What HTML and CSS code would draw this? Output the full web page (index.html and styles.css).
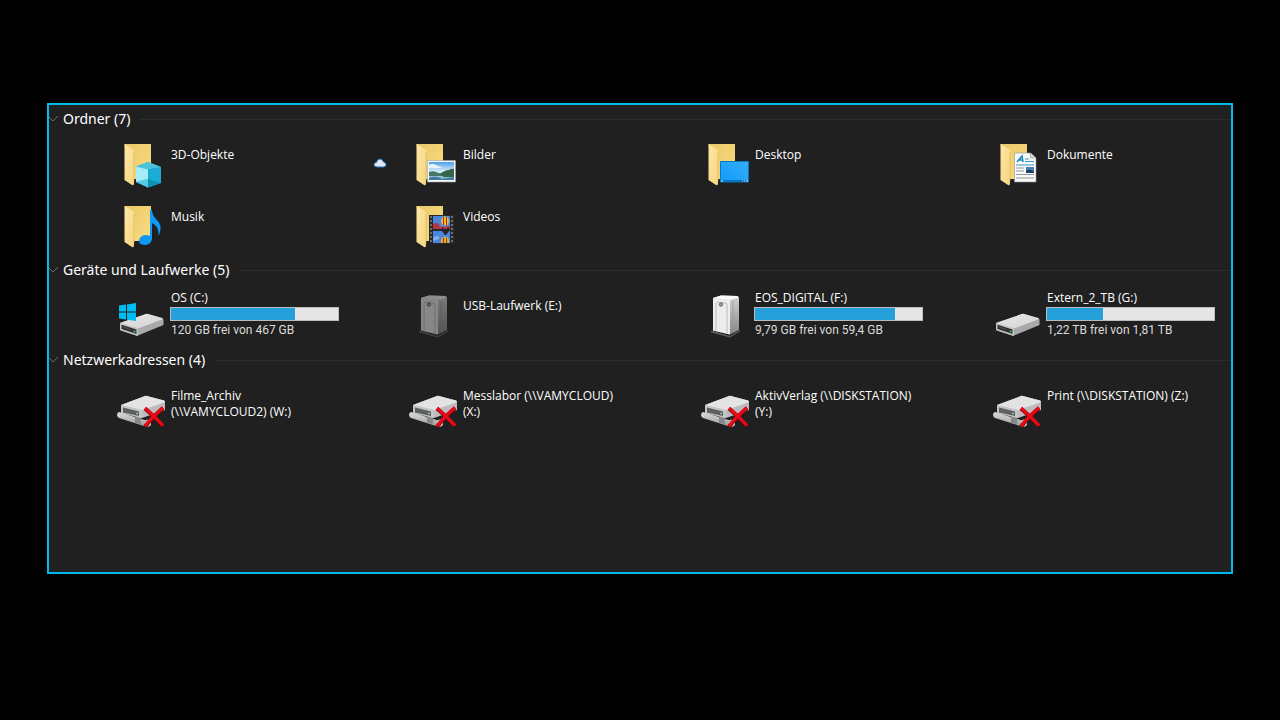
FILE: index.html
```html
<!DOCTYPE html>
<html lang="de">
<head>
    <meta charset="UTF-8">
    <meta name="viewport" content="width=device-width, initial-scale=1.0">
    <title>Dieser PC</title>
    <link rel="stylesheet" href="styles.css">
</head>
<body>
    <!-- Gemeinsame Symbole -->
    <svg class="defs" width="0" height="0" aria-hidden="true">
        <defs>
            <linearGradient id="folderBack" x1="0" y1="0" x2="1" y2="1">
                <stop offset="0" stop-color="#e9c866"/>
                <stop offset="1" stop-color="#fbdc83"/>
            </linearGradient>
            <linearGradient id="folderFlap" x1="0" y1="0" x2="1" y2="1">
                <stop offset="0" stop-color="#ffe7a4"/>
                <stop offset="1" stop-color="#f6d581"/>
            </linearGradient>
            <linearGradient id="sky" x1="0" y1="0" x2="0" y2="1">
                <stop offset="0" stop-color="#4b9fea"/>
                <stop offset="0.5" stop-color="#d3ebf5"/>
                <stop offset="1" stop-color="#6fa9c4"/>
            </linearGradient>
            <linearGradient id="screen" x1="0" y1="1" x2="1" y2="0">
                <stop offset="0" stop-color="#109bf8"/>
                <stop offset="1" stop-color="#35adfb"/>
            </linearGradient>
            <linearGradient id="driveTop" x1="0" y1="0" x2="1" y2="1">
                <stop offset="0" stop-color="#e9e9e9"/>
                <stop offset="1" stop-color="#d2d2d4"/>
            </linearGradient>
            <linearGradient id="tube" x1="0" y1="0" x2="0" y2="1">
                <stop offset="0" stop-color="#dcdcdc"/>
                <stop offset="1" stop-color="#9a9a9a"/>
            </linearGradient>
            <linearGradient id="towerSide" x1="0" y1="0" x2="0" y2="1">
                <stop offset="0" stop-color="#d5d5d5"/>
                <stop offset="1" stop-color="#858585"/>
            </linearGradient>
        </defs>
        <symbol id="folder" viewBox="0 0 52 48">
            <path d="M9.500 3H36V38H17Z" fill="url(#folderBack)"/>
            <path d="M9.500 3L18 8Q19 9 19 11V42Q19 45 17 44L9.500 39Z" fill="url(#folderFlap)"/>
            <path d="M19 11V40" stroke="#d9b65c" stroke-width="0.6"/>
        </symbol>
        <symbol id="drive" viewBox="0 0 52 48">
            <path d="M5 32L31 23Q32 22.600 33 23L47 27Q48.500 27.500 48.500 29V34L23 44.500Q22 45 21 44.500L6 39.500Q5 39 5 38Z" fill="#a9a9ab"/>
            <path d="M5 32L31 23Q32 22.600 33 23L47 27Q48.500 27.700 47 28.500L23 37.500Z" fill="url(#driveTop)"/>
            <path d="M5 32L23 37.500V45L6 39.500Q5 39 5 38Z" fill="#c6c6c6"/>
            <path d="M6.500 33.700L21.500 38.500V43L6.500 38Z" fill="#303234"/>
            <path d="M8 36L15 38.500" stroke="#555" stroke-width="1"/>
            <circle cx="19.500" cy="40.500" r="1" fill="#35d04a"/>
        </symbol>
        <symbol id="tower" viewBox="0 -1 52 48">
            <path d="M12 38.500L31 44L41 38V39.500L31 45.500L12 40.500Z" fill="#5b5b5b"/>
            <path d="M14 6L22 3.500L38 4Q40 4.500 40 6V38L31 42.500L14 38.500Z" fill="url(#towerSide)"/>
            <path d="M14 6L22 3.500L38 4L40 5.500L31 8Z" fill="#fafafa"/>
            <path d="M14 6L31 8V42.500L14 38.500Z" fill="#ededed"/>
            <path d="M17 39V12Q17 10 19 10L26 11Q28 11 28 13V41" fill="none" stroke="#bcbcbc" stroke-width="1"/>
            <circle cx="22" cy="12.500" r="1.700" fill="#a3a19a" stroke="#66645b" stroke-width="1"/>
            <path d="M34 9V39" stroke="#999" stroke-width="0.700"/>
        </symbol>
        <symbol id="netdrive" viewBox="0 0 52 48">
            <path d="M4 30L36 40V43Q33 46 29 44L4 36Q2 35 2 33Q2 30.500 4 30Z" fill="url(#tube)"/>
            <path d="M20 35L26 33V42L20 41Z" fill="#85878a"/>
            <path d="M6 23L30 14Q31 13.600 32 14L49 18.500Q50 19 50 21V28L27 36L6 31Z" fill="#bcbcbe"/>
            <path d="M6 23L30 14Q31 13.600 32 14L49 18.500Q51 19.500 49 20.500L27 28Z" fill="#e3e3e4"/>
            <path d="M6 23L27 28V36L6 31Z" fill="#c5c5c6"/>
            <path d="M8 25.500L24 29.500V34L8 30.500Z" fill="#5d6062"/>
            <circle cx="22" cy="31.500" r="0.800" fill="#c5f5c8"/>
            <ellipse cx="33" cy="41" rx="3" ry="3.500" fill="#c9c9c9"/>
            <path d="M30 26.500Q39 34 48 44M48 26Q38 34 30 44.500" fill="none" stroke="#8f0007" stroke-width="4"/>
            <path d="M30 26Q39 33.500 48 43.500M48 25.500Q38 33.500 30 44" fill="none" stroke="#ea0a17" stroke-width="3"/>
        </symbol>
    </svg>

    <main class="explorer">
        <section class="group">
            <h2 class="group-title">
                <button type="button" aria-expanded="true">
                    <svg class="chevron" viewBox="0 0 10 8" aria-hidden="true"><path d="M0 2L4 6L9 1"/></svg>
                    Ordner (7)
                </button>
            </h2>
            <ul class="tiles">
                <li>
                    <a class="tile" href="#3d-objekte">
                        <span class="status"></span>
                        <svg class="icon" viewBox="0 0 52 48" aria-hidden="true">
                            <use href="#folder"/>
                            <path d="M33 21L46 26V42L33 46.500L21 41V25.500Z" fill="#23b5d8"/>
                            <path d="M33 21L46 26L33 28.500L21 25.500Z" fill="#4cc3dd"/>
                            <path d="M21 25.500L33 28.500V38L21 41Z" fill="#a5ecf7"/>
                            <path d="M33 28.500L46 26V42L33 38Z" fill="#1cabd2"/>
                            <path d="M21 41L33 38V46.500Z" fill="#55cde3"/>
                            <path d="M33 38L46 42L33 46.500Z" fill="#0f91b7"/>
                        </svg>
                        <span class="info">3D-Objekte</span>
                    </a>
                </li>
                <li>
                    <a class="tile" href="#bilder">
                        <span class="status">
                            <svg class="cloud" viewBox="0 0 14 10" aria-hidden="true">
                                <path d="M4 9Q1 9 1 6.500Q1 4.500 3.500 4.500Q4 1 7 1Q9.500 1 10.500 4Q13 4.500 13 6.500Q13 9 10.500 9Z"/>
                            </svg>
                        </span>
                        <svg class="icon" viewBox="0 0 52 48" aria-hidden="true">
                            <use href="#folder"/>
                            <path d="M20.500 19.500H48.500V41H20.500Z" fill="#f6f7f8" stroke="#9ba4ab" stroke-width="0.600"/>
                            <path d="M22 21H47V39H22Z" fill="url(#sky)"/>
                            <path d="M22 24Q25 22 29 24T36 26Q32 28 22 27Z" fill="#e9f5fb"/>
                            <path d="M22 31Q27 29 31 32Q39 33 47 33V35H22Z" fill="#477767"/>
                            <path d="M33 33Q38 29 42 29Q44 27 47 28V36H37Z" fill="#35634a"/>
                            <path d="M22 37Q29 34 35 38L47 36V39H22Z" fill="#40799a"/>
                        </svg>
                        <span class="info">Bilder</span>
                    </a>
                </li>
                <li>
                    <a class="tile" href="#desktop">
                        <span class="status"></span>
                        <svg class="icon" viewBox="0 0 52 48" aria-hidden="true">
                            <use href="#folder"/>
                            <path d="M21.500 20.500H49.500V41H21.500Z" fill="url(#screen)" stroke="#0878c2" stroke-width="1"/>
                            <path d="M22 39H49V41H22Z" fill="#0876be"/>
                            <path d="M22 40H24M43 40H44M45 40H46M47 40H49" stroke="#d5effd" stroke-width="1"/>
                        </svg>
                        <span class="info">Desktop</span>
                    </a>
                </li>
                <li>
                    <a class="tile" href="#dokumente">
                        <span class="status"></span>
                        <svg class="icon" viewBox="0 0 52 48" aria-hidden="true">
                            <use href="#folder"/>
                            <path d="M23.500 12H39.500L45 17V41H23.500Z" fill="#f9f9f9" stroke="#8c9298" stroke-width="0.600"/>
                            <path d="M39.500 12V17H45" fill="#d8dde1" stroke="#8c9298" stroke-width="0.600"/>
                            <path d="M26 21L31 15L32 21M28 19H32" fill="none" stroke="#1687ba" stroke-width="1.500"/>
                            <path d="M34 18H38M34 20.500H43M25 24H43" stroke="#3a9dbb" stroke-width="1"/>
                            <path d="M25 27H33M25 30H33M25 33.500H43M25 37H43" stroke="#8c9aa3" stroke-width="1"/>
                            <path d="M35 26H43V32H35Z" fill="#477fb0"/>
                            <path d="M35 32V30Q39 27 43 31V32Z" fill="#1c3f5f"/>
                        </svg>
                        <span class="info">Dokumente</span>
                    </a>
                </li>
                <li>
                    <a class="tile" href="#musik">
                        <span class="status"></span>
                        <svg class="icon" viewBox="0 0 52 48" aria-hidden="true">
                            <use href="#folder"/>
                            <path d="M35 7H37Q37 12 41 16Q46 21 45.500 26Q45 31 43 32.500Q45 24 37 20V36Q36 42 29 42Q24 41.500 24 37.500Q25 32 31 32Q33.500 32 35 33Z" fill="#0d99f4"/>
                        </svg>
                        <span class="info">Musik</span>
                    </a>
                </li>
                <li>
                    <a class="tile" href="#videos">
                        <span class="status"></span>
                        <svg class="icon" viewBox="0 0 52 48" aria-hidden="true">
                            <use href="#folder"/>
                            <path d="M22 12H47V41H22Z" fill="#29292b"/>
                            <path d="M24 13V41M45 13V41" stroke="#858585" stroke-width="1.500" stroke-dasharray="2 2"/>
                            <path d="M26 13H43V26H26ZM26 28H43V40H26Z" fill="#4b86de"/>
                            <path d="M26 21Q29 19 32 21L33 24L43 23V26H26Z" fill="#ba3542"/>
                            <ellipse cx="38" cy="18" rx="4" ry="4.500" fill="#edbd27"/>
                            <path d="M36.500 14V22M39.500 14V22" stroke="#ad2630" stroke-width="1"/>
                            <path d="M35 24L38 27L42 24V28L39 32H38L35 28Z" fill="#28202b"/>
                            <path d="M26 35Q30 31 33 35Q30 38 26 37Z" fill="#86aeea"/>
                            <path d="M34 38Q34 34 38 34T42 38V40H34Z" fill="#e4b728"/>
                            <path d="M36.500 35V40M39.500 35V40" stroke="#9b2730" stroke-width="1"/>
                        </svg>
                        <span class="info">Videos</span>
                    </a>
                </li>
            </ul>
        </section>

        <section class="group drives">
            <h2 class="group-title">
                <button type="button" aria-expanded="true">
                    <svg class="chevron" viewBox="0 0 10 8" aria-hidden="true"><path d="M0 2L4 6L9 1"/></svg>
                    Geräte und Laufwerke (5)
                </button>
            </h2>
            <ul class="tiles">
                <li>
                    <a class="tile" href="#c">
                        <span class="status"></span>
                        <svg class="icon" viewBox="0 0 52 48" aria-hidden="true">
                            <use href="#drive"/>
                            <path d="M4 14.500L11 13.500V20.500H4ZM12 13.400L21 12V20.500H12ZM4 21.500H11V28.500L4 27.500ZM12 21.500H21V30L12 28.700Z" fill="#00bdf2"/>
                        </svg>
                        <span class="info">
                            <span class="name">OS (C:)</span>
                            <span class="bar"><span class="used" style="width: 74%"></span></span>
                            <span class="free">120 GB frei von 467 GB</span>
                        </span>
                    </a>
                </li>
                <li>
                    <a class="tile empty" href="#e">
                        <span class="status"></span>
                        <svg class="icon" viewBox="0 0 52 48" aria-hidden="true"><use href="#tower"/></svg>
                        <span class="info">USB-Laufwerk (E:)</span>
                    </a>
                </li>
                <li>
                    <a class="tile" href="#f">
                        <span class="status"></span>
                        <svg class="icon" viewBox="0 0 52 48" aria-hidden="true"><use href="#tower"/></svg>
                        <span class="info">
                            <span class="name">EOS_DIGITAL (F:)</span>
                            <span class="bar"><span class="used" style="width: 84%"></span></span>
                            <span class="free">9,79 GB frei von 59,4 GB</span>
                        </span>
                    </a>
                </li>
                <li>
                    <a class="tile" href="#g">
                        <span class="status"></span>
                        <svg class="icon" viewBox="0 0 52 48" aria-hidden="true"><use href="#drive"/></svg>
                        <span class="info">
                            <span class="name">Extern_2_TB (G:)</span>
                            <span class="bar"><span class="used" style="width: 33.500%"></span></span>
                            <span class="free">1,22 TB frei von 1,81 TB</span>
                        </span>
                    </a>
                </li>
            </ul>
        </section>

        <section class="group network">
            <h2 class="group-title">
                <button type="button" aria-expanded="true">
                    <svg class="chevron" viewBox="0 0 10 8" aria-hidden="true"><path d="M0 2L4 6L9 1"/></svg>
                    Netzwerkadressen (4)
                </button>
            </h2>
            <ul class="tiles">
                <li>
                    <a class="tile" href="#w">
                        <span class="status"></span>
                        <svg class="icon" viewBox="0 0 52 48" aria-hidden="true"><use href="#netdrive"/></svg>
                        <span class="info">Filme_Archiv<br>(\\VAMYCLOUD2) (W:)</span>
                    </a>
                </li>
                <li>
                    <a class="tile" href="#x">
                        <span class="status"></span>
                        <svg class="icon" viewBox="0 0 52 48" aria-hidden="true"><use href="#netdrive"/></svg>
                        <span class="info">Messlabor (\\VAMYCLOUD)<br>(X:)</span>
                    </a>
                </li>
                <li>
                    <a class="tile" href="#y">
                        <span class="status"></span>
                        <svg class="icon" viewBox="0 0 52 48" aria-hidden="true"><use href="#netdrive"/></svg>
                        <span class="info">AktivVerlag (\\DISKSTATION)<br>(Y:)</span>
                    </a>
                </li>
                <li>
                    <a class="tile" href="#z">
                        <span class="status"></span>
                        <svg class="icon" viewBox="0 0 52 48" aria-hidden="true"><use href="#netdrive"/></svg>
                        <span class="info">Print (\\DISKSTATION) (Z:)</span>
                    </a>
                </li>
            </ul>
        </section>
    </main>
</body>
</html>
```
FILE: styles.css
```css
* {
    box-sizing: border-box;
}

body {
    margin: 0;
    min-height: 100vh;
    padding: 103px 47px 146px;
    display: flex;
    background-color: #000;
    color: #fff;
    font-family: "Open Sans", "Noto Sans", sans-serif;
    font-size: 12px;
    line-height: 16px;
}

.defs {
    position: absolute;
}

.explorer {
    flex: 1;
    min-width: 0;
    padding-top: 2px;
    background-color: #202020;
    border: 2px solid #00b9e8;
}

.group-title {
    display: flex;
    align-items: center;
    gap: 9px;
    margin: 0;
    height: 24px;
}

.group-title::after {
    content: "";
    flex: 1;
    height: 1px;
    background-color: #2c2c2c;
}

.group-title button {
    display: flex;
    align-items: center;
    gap: 4px;
    padding: 0;
    border: none;
    background: none;
    color: #fff;
    font-family: "Noto Sans", "Open Sans", sans-serif;
    font-size: 14px;
    line-height: 24px;
    cursor: pointer;
}

.chevron {
    width: 10px;
    height: 8px;
    fill: none;
    stroke: #6c6c6c;
}

.tiles {
    display: grid;
    grid-template-columns: repeat(auto-fill, 268px);
    column-gap: 24px;
    margin: 0;
    padding: 3px 8px 0 30px;
    list-style: none;
}

.tile {
    display: flex;
    height: 62px;
    color: inherit;
    text-decoration: none;
}

.status {
    width: 36px;
    padding: 24px 0 0 2px;
}

.cloud {
    display: block;
    width: 14px;
    height: 10px;
    fill: #dfe6ec;
    stroke: #1a74c4;
}

.icon {
    flex: none;
    width: 52px;
    height: 48px;
    margin: 7px 4px 0 0;
}

.info {
    flex: 1;
    padding-top: 13px;
    white-space: nowrap;
}

.drives .tiles,
.network .tiles {
    padding-top: 0;
}

.drives .tile {
    height: 66px;
}

.drives .icon {
    margin-top: 9px;
}

.drives .info {
    padding-top: 8px;
}

.drives .empty .info {
    padding-top: 16px;
}

.drives .empty .icon {
    opacity: 0.5;
}

.name,
.free {
    display: block;
}

.free {
    color: #dcdcdc;
    font-family: Roboto, "Open Sans", sans-serif;
}

.bar {
    display: block;
    width: 169px;
    height: 14px;
    margin: 1px 0 1px -1px;
    background-color: #e6e6e6;
    border: 1px solid #bcbcbc;
}

.used {
    display: block;
    height: 100%;
    background-color: #26a0da;
}

.network .icon {
    margin-top: 10px;
}

.network .info {
    padding-top: 16px;
}
```
